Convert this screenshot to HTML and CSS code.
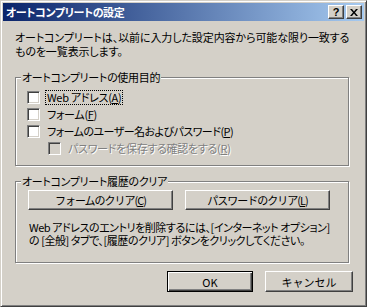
FILE: index.html
```html
<!DOCTYPE html>
<html lang="ja">
<head>
<meta charset="utf-8">
<link rel="stylesheet" href="styles.css">
</head>
<body>
<div class="window">
  <div class="titlebar">
    <span class="title">オートコンプリートの設定</span>
    <div class="tbtns">
      <span class="tbtn help">?</span>
      <span class="tbtn close"><svg width="8" height="7" viewBox="0 0 8 7"><path d="M0 0h2l2 2.5L6 0h2L5 3.5 8 7H6L4 4.5 2 7H0l3-3.5z" fill="#000"/></svg></span>
    </div>
  </div>
  <div class="content">
    <p class="intro">オートコンプリートは、以前に入力した設定内容から可能な限り一致する<br>ものを一覧表示します。</p>
    <fieldset class="group g1">
      <legend>オートコンプリートの使用目的</legend>
      <div class="group-body">
        <div class="row"><span class="cb"></span><span class="lbl focus">Web アドレス(<u>A</u>)</span></div>
        <div class="row"><span class="cb"></span><span class="lbl">フォーム(<u>F</u>)</span></div>
        <div class="row"><span class="cb"></span><span class="lbl tight">フォームのユーザー名およびパスワード(<u>P</u>)</span></div>
        <div class="row sub disabled"><span class="cb"></span><span class="lbl">パスワードを保存する確認をする(<u>R</u>)</span></div>
      </div>
    </fieldset>
    <fieldset class="group g2">
      <legend>オートコンプリート履歴のクリア</legend>
      <div class="group-body">
        <div class="btnrow">
          <button class="btn wide">フォームのクリア(<u>C</u>)</button>
          <button class="btn wide">パスワードのクリア(<u>L</u>)</button>
        </div>
        <p class="note">Web アドレスのエントリを削除するには、[インターネット オプション]<br>の [全般] タブで、[履歴のクリア] ボタンをクリックしてください。</p>
      </div>
    </fieldset>
    <div class="actions">
      <button class="btn act ok default">OK</button>
      <button class="btn act cancel">キャンセル</button>
    </div>
  </div>
</div>
</body>
</html>
```
FILE: styles.css
```css
html, body {
  margin: 0;
  padding: 0;
  background: #d4d0c8;
}
body {
  font-family: "Noto Sans CJK JP", "Liberation Sans", sans-serif;
  font-size: 11px;
  letter-spacing: -0.3px;
  color: #000;
  font-feature-settings: "palt";
}
.window {
  width: 367px;
  height: 307px;
  box-sizing: border-box;
  border: 1px solid;
  border-color: #d4d0c8 #404040 #404040 #d4d0c8;
  box-shadow: inset 1px 1px #fff, inset -1px -1px #808080;
  padding: 2px;
  background: #d4d0c8;
}
.titlebar {
  height: 18px;
  background: linear-gradient(to right, #0a246a, #a6caf0);
  display: flex;
  align-items: center;
  justify-content: space-between;
  padding: 0 2px 0 3px;
}
.title {
  color: #fff;
  font-weight: bold;
  font-size: 11px;
  line-height: 18px;
  letter-spacing: -0.4px;
}
.tbtns {
  display: flex;
  gap: 2px;
}
.tbtn {
  width: 16px;
  height: 14px;
  box-sizing: border-box;
  background: #d4d0c8;
  border: 1px solid;
  border-color: #fff #404040 #404040 #fff;
  box-shadow: inset -1px -1px #808080, inset 1px 1px #d4d0c8;
  display: flex;
  align-items: center;
  justify-content: center;
  font-family: "Liberation Sans", sans-serif;
  font-weight: bold;
  font-size: 11px;
  line-height: 12px;
  letter-spacing: 0;
}
.content {
  padding: 0 15px 0 12px;
}
.intro {
  margin: 9px 0 0;
  line-height: 14px;
  letter-spacing: -0.1px;
  white-space: nowrap;
}
.group {
  margin: 0;
  border: 1px solid #808080;
  box-shadow: inset 1px 1px #fff, 1px 1px #fff;
  padding: 0;
  min-width: 0;
}
.group legend {
  padding: 0 1px;
  margin-left: 5px;
  line-height: 14px;
  background: #d4d0c8;
}
.g1 {
  margin-top: 12px;
}
.g1 .group-body {
  padding: 5px 0 8px 11px;
}
.row {
  display: flex;
  align-items: center;
  height: 17px;
}
.row.sub {
  padding-left: 21px;
}
.cb {
  width: 13px;
  height: 13px;
  box-sizing: border-box;
  border: 1px solid;
  border-color: #808080 #fff #fff #808080;
  box-shadow: inset 1px 1px #404040, inset -1px -1px #d4d0c8;
  background: #fff;
  margin-right: 5px;
  flex: none;
}
.lbl {
  line-height: 13px;
  padding: 0 1px;
  border: 1px solid transparent;
  white-space: nowrap;
}
.lbl.tight {
  letter-spacing: -0.55px;
}
.lbl.focus {
  border: 1px dotted #000;
}
.disabled .cb {
  background: #d4d0c8;
}
.disabled .lbl {
  color: #808080;
  text-shadow: 1px 1px #fff;
}
.g2 {
  margin-top: 8px;
}
.g2 .group-body {
  padding: 2px 0 15px 12px;
}
.btnrow {
  display: flex;
  gap: 12px;
}
.btn {
  font-family: inherit;
  font-size: 11px;
  letter-spacing: -0.5px;
  color: #000;
  background: #d4d0c8;
  border: 1px solid;
  border-color: #fff #404040 #404040 #fff;
  box-shadow: inset -1px -1px #808080, inset 1px 1px #d4d0c8;
  padding: 0;
  margin: 0;
  height: 20px;
  line-height: 16px;
}
.btn.wide {
  width: 145px;
  letter-spacing: -1px;
}
.note {
  margin: 11px 0 0 1px;
  line-height: 13px;
  letter-spacing: -0.45px;
  white-space: nowrap;
}
.actions {
  display: flex;
  justify-content: flex-end;
  gap: 12px;
  margin-top: 8px;
  margin-right: -4px;
}
.btn.act {
  height: 21px;
  letter-spacing: 0;
}
.btn.ok {
  width: 86px;
}
.btn.cancel {
  width: 88px;
}
.btn.default {
  border: 1px solid #000;
  box-shadow: inset 1px 1px #fff, inset -1px -1px #404040, inset -2px -2px #808080;
}
```
